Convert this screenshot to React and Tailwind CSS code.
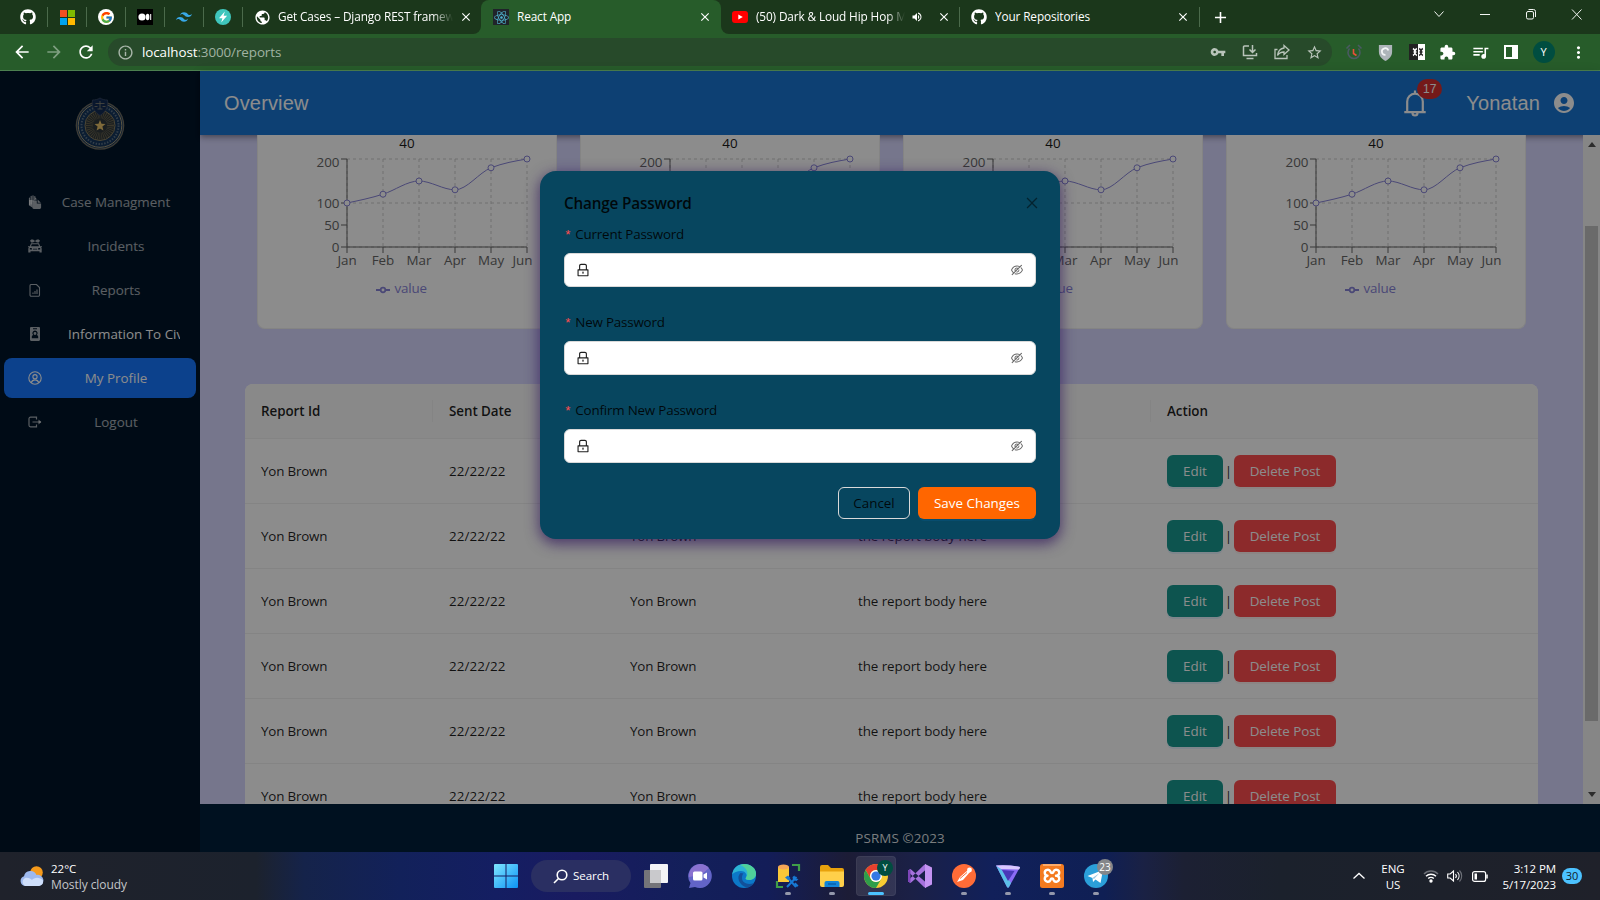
import React from "react";
import { FaGithub, FaReact } from "react-icons/fa";
import { FcGoogle } from "react-icons/fc";
import { SiTailwindcss } from "react-icons/si";
import { AiOutlineLock, AiOutlineEyeInvisible, AiOutlineClose } from "react-icons/ai";
import {
  MdAccountCircle, MdExtension, MdQueueMusic, MdVpnKey, MdStarBorder, MdArrowBack,
  MdArrowForward, MdRefresh, MdInfoOutline, MdMoreVert, MdClose, MdAdd, MdVolumeUp, MdPublic,
} from "react-icons/md";

/* ---------- browser chrome ---------- */

const Sep = () => <span className="h-5 w-px shrink-0 bg-[#4b6a4b]" />;

const TabClose = () => <MdClose className="size-[14px] shrink-0 text-white" />;

function PinnedTab({ children }) {
  return (
    <>
      <span className="flex w-[38px] shrink-0 items-center justify-center">{children}</span>
      <Sep />
    </>
  );
}

function TabTitle({ children, fade }) {
  return (
    <span
      className={
        "min-w-0 flex-1 overflow-hidden whitespace-nowrap text-[11.8px] tracking-[-0.12px] text-white " +
        (fade ? "[mask-image:linear-gradient(to_right,black_88%,transparent)]" : "")
      }
    >
      {children}
    </span>
  );
}

function TabStrip() {
  return (
    <div className="flex h-[34px] bg-[#275c2a]">
      <div className="flex w-[481px] items-center rounded-br-lg bg-[#1b371b] pl-[9px]">
        <PinnedTab><FaGithub className="size-4 text-white" /></PinnedTab>
        <PinnedTab>
          <span className="grid grid-cols-2 gap-px">
            <i className="size-[7px] bg-[#f25022]" /><i className="size-[7px] bg-[#7fba00]" />
            <i className="size-[7px] bg-[#00a4ef]" /><i className="size-[7px] bg-[#ffb900]" />
          </span>
        </PinnedTab>
        <PinnedTab>
          <span className="flex size-4 items-center justify-center rounded-full bg-white">
            <FcGoogle className="size-[13px]" />
          </span>
        </PinnedTab>
        <PinnedTab>
          <svg className="size-4" viewBox="0 0 16 16">
            <rect width="16" height="16" fill="#000" />
            <circle cx="5" cy="8" r="3.6" fill="#fff" />
            <ellipse cx="10.6" cy="8" rx="1.8" ry="3.3" fill="#fff" />
            <rect x="13.2" y="5" width="1" height="6" fill="#fff" />
          </svg>
        </PinnedTab>
        <PinnedTab><SiTailwindcss className="size-4 text-[#38a8e8]" /></PinnedTab>
        <PinnedTab>
          <svg className="size-4" viewBox="0 0 16 16">
            <circle cx="8" cy="8" r="8" fill="#3fc6bd" />
            <path d="M9.8 2.5 4 9.2h3.4l-1.2 4.3 5.9-6.7H8.6z" fill="#fff" />
          </svg>
        </PinnedTab>
        <div className="flex min-w-0 flex-1 items-center pl-[11px] pr-2">
          <MdPublic className="mr-[7px] size-[17px] shrink-0 text-white" />
          <TabTitle fade>Get Cases – Django REST framework</TabTitle>
          <span className="ml-[6px] flex"><TabClose /></span>
        </div>
      </div>
      <div className="w-[240px] bg-[#1b371b]">
        <div className="flex h-full items-center rounded-t-lg bg-[#275c2a] pl-3 pr-[9px]">
          <span className="mr-2 flex size-4 items-center justify-center bg-[#20232a]">
            <FaReact className="size-[15px] text-[#4fb3cf]" />
          </span>
          <TabTitle>React App</TabTitle>
          <TabClose />
        </div>
      </div>
      <div className="flex flex-1 items-center rounded-bl-lg bg-[#1b371b]">
        <div className="flex w-[238px] items-center pl-[11px] pr-2">
          <svg className="mr-2 h-[12px] w-4 shrink-0" viewBox="0 0 16 12">
            <rect width="16" height="12" rx="3" fill="#f00" />
            <path d="M6.3 3.4v5.2L10.8 6z" fill="#fff" />
          </svg>
          <TabTitle fade>(50) Dark &amp; Loud Hip Hop Mix</TabTitle>
          <MdVolumeUp className="ml-[6px] mr-[14px] size-3 shrink-0 text-white" />
          <TabClose />
        </div>
        <Sep />
        <div className="flex w-[239px] items-center pl-[11px] pr-[9px]">
          <FaGithub className="mr-2 size-4 shrink-0 text-white" />
          <TabTitle>Your Repositories</TabTitle>
          <TabClose />
        </div>
        <Sep />
        <MdAdd className="ml-[11px] size-[19px] text-white" />
        <svg className="ml-auto h-[34px] w-[172px]" viewBox="0 0 172 34" fill="none" stroke="#f2f5f2" strokeWidth="1">
          <path d="m6.500 11.500 4.500 5 4.500-5M52 14.500h10" />
          <rect x="98.500" y="11.500" width="7" height="7.500" rx="1.500" />
          <path d="M100.500 9.500h5a2 2 0 0 1 2 2v5.500M144 9.500l9.500 10M153.500 9.500l-9.500 10" />
        </svg>
      </div>
    </div>
  );
}

function Toolbar() {
  return (
    <div className="flex h-9 items-center bg-[#275c2a]">
      <div className="flex w-[108px] items-center gap-3 pl-3">
        <MdArrowBack className="size-5 text-white" />
        <MdArrowForward className="size-5 text-[#7f9f81]" />
        <MdRefresh className="size-5 text-white" />
      </div>
      <div className="flex h-7 w-[1224px] items-center rounded-full bg-[#274a2a] pl-[9px] pr-[9px]">
        <MdInfoOutline className="mr-[8px] size-[17px] text-[#a9b6aa]" />
        <span className="text-[13.400px] tracking-[-0.08px] text-[#a1b3a2]">
          <span className="text-white">localhost</span>:3000/reports
        </span>
        <div className="ml-auto flex items-center gap-4 text-[#b9c4ba]">
          <MdVpnKey className="size-4" />
          <svg className="size-4" viewBox="0 0 16 16" fill="none" stroke="currentColor" strokeWidth="1.500">
            <path d="M7 2H2.500a1 1 0 0 0-1 1v8.500h13V9M4.500 14.500h7M10.500 1v7M7.500 5.500l3 3 3-3" />
          </svg>
          <svg className="size-4" viewBox="0 0 16 16" fill="none" stroke="currentColor" strokeWidth="1.300">
            <path d="M3.500 5.500H1v9h12V11M10 1.500 15 6l-5 4.500V8C7 8 5 9 3.500 11.500 4 7.500 6 4.500 10 4z" />
          </svg>
          <MdStarBorder className="size-[17px]" />
        </div>
      </div>
      <div className="flex flex-1 items-center justify-between pl-[13px] pr-[12px]">
        <svg className="size-[18px]" viewBox="0 0 18 18" fill="none" stroke="#4a5a63" strokeWidth="1.600">
          <path d="M4.500 5.500a6 6 0 1 0 9 0M1.500 5.500 5 2M16.500 5.500 13 2" />
          <path d="M8.500 6v4.500l3 2" stroke="#e8503a" />
        </svg>
        <svg className="size-[17px]" viewBox="0 0 18 18">
          <path d="M2 1h14v7c0 5-3 8-7 10-4-2-7-5-7-10z" fill="#aeb5ba" />
          <path d="M12 7A3.500 3.500 0 1 0 9 11.500" fill="none" stroke="#f3f5f6" strokeWidth="1.800" />
        </svg>
        <svg className="size-4" viewBox="0 0 16 16">
          <rect width="9" height="16" fill="#222" /><rect x="9" width="7" height="16" fill="#fff" />
          <path d="M4 4.500a4 4 0 0 1 0 7M7.800 4.500a4 4 0 0 0 0 7M4.500 8h3" stroke="#fff" strokeWidth="1.500" fill="none" />
          <path d="M10.200 4.500a4 4 0 0 1 0 7M13.800 4.500a4 4 0 0 0 0 7M10.500 8h3" stroke="#222" strokeWidth="1.500" fill="none" />
        </svg>
        <MdExtension className="size-[17px] text-white" />
        <MdQueueMusic className="size-[19px] text-white" />
        <svg className="size-[14px]" viewBox="0 0 14 14">
          <path d="M0 0h14v14H0zM2 2v10h6V2z" fill="#fff" fillRule="evenodd" />
        </svg>
        <span className="flex size-[22px] items-center justify-center rounded-full bg-[#004d40] text-[11px] text-white">Y</span>
        <MdMoreVert className="size-[19px] text-white" />
      </div>
    </div>
  );
}

/* ---------- sidebar ---------- */

function Seal() {
  return (
    <svg className="h-14 w-[52px]" viewBox="0 0 52 56">
      <circle cx="26" cy="29.500" r="24.300" fill="#6f6d62" />
      <circle cx="26" cy="29.500" r="23" fill="#15355c" />
      <circle cx="26" cy="29.500" r="21.800" fill="none" stroke="#a59a78" strokeWidth="1" />
      <circle cx="26" cy="29.500" r="18.500" fill="none" stroke="#5f7486" strokeWidth="2" strokeDasharray="1.400 1.500" />
      <circle cx="26" cy="29.500" r="15" fill="#31383b" stroke="#8d8260" strokeWidth="1" />
      <circle cx="26" cy="29.500" r="10.500" fill="none" stroke="#6d674f" strokeWidth="7" strokeDasharray="0.700 1.100" />
      <path d="M18.500 4c3 0 5-.5 7.500-2 2.500 1.500 4.500 2 7.500 2 1 7-2 12-7.500 15.500C20.500 16 17.500 11 18.500 4z" fill="#122a52" stroke="#3b4a66" strokeWidth=".8" />
      <path d="M26 5v8M21.500 7.500h9M20.500 10.500h3M28.500 10.500h3M23.500 13h5" stroke="#8d8a78" strokeWidth=".8" fill="none" />
      <path d="m26 24 1.500 3.800 4 .2-3.100 2.600 1 4-3.400-2.200-3.400 2.200 1-4-3.100-2.600 4-.2z" fill="#e8c26a" />
    </svg>
  );
}

const menuIcons = {
  cases: (
    <g fill="currentColor">
      <path d="M1.500 10V3.200M3.200 9V1.300M5 6V.8M6.800 5V1.600" stroke="currentColor" strokeWidth="1.200" strokeLinecap="round" />
      <path d="M1 5h3.500v7.500C2.500 11.500 1 10.500 1 9z" />
      <path d="M5.200 5.500h3.600v3h4.300v4.100c0 .8-.6 1.400-1.400 1.400H5.800c-.8 0-1.400-.6-1.400-1.400V6.300c0-.5.300-.8.800-.8z" />
      <path d="M9.600 4.500v3.200h3.300z" />
      <path d="M7.500 2.500 9 4.500H6.500z" />
    </g>
  ),
  incidents: (
    <g fill="currentColor">
      <path d="M2 1.800 3.200.6h2L6.300 2 5.200 3.400H3.200zM7.700 2 8.800.6h2L12 1.800l-1.200 1.600h-2z" />
      <path d="M5.500 1.600h3v.9h-3z" />
      <path fillRule="evenodd" d="M3 4.300h8l1.200 2.900H14v1h-1l.7 1.200v4.200h-2.200v-1.400h-9v1.400H.3V9.400L1 8.200H0v-1h1.800zM3.800 5.300 3 7.300h8l-.8-2zM1.800 9v1.400h2.400L3.600 9zM10.400 9l-.6 1.400h2.400V9zM5 9.800h4v.8H5z" />
    </g>
  ),
  reports: (
    <g fill="none" stroke="currentColor" strokeWidth="1.100">
      <path d="M3 1.500h5.500l3 3v7.500a1.200 1.200 0 0 1-1.200 1.200H3.200A1.200 1.200 0 0 1 2 12V2.700A1.200 1.200 0 0 1 3 1.500z" />
      <path d="M5 11V9.500M7 11V8M9 11V6.500" />
    </g>
  ),
  info: (
    <path fill="currentColor" fillRule="evenodd" d="M3.200 0h7.600c.7 0 1.200.5 1.200 1.200v11.600c0 .7-.5 1.200-1.200 1.200H3.200c-.7 0-1.200-.5-1.200-1.200V1.200C2 .5 2.500 0 3.200 0zM5 1.300v1h4v-1zM7 3.600a2.600 2.600 0 0 0-1.800 4.500c-.9.400-1.400 1-1.400 1.900v1.300h6.400V10c0-.9-.5-1.500-1.400-1.900A2.600 2.600 0 0 0 7 3.600zM7 5a1.400 1.400 0 1 1 0 2.900A1.400 1.400 0 0 1 7 5z" />
  ),
  profile: (
    <g fill="none" stroke="currentColor" strokeWidth="1.100">
      <circle cx="7" cy="7" r="6.200" /><circle cx="7" cy="5.700" r="2.100" />
      <path d="M3.200 11.800C4 9.500 5.300 8.900 7 8.900s3 .6 3.800 2.900" />
    </g>
  ),
  logout: (
    <g fill="none" stroke="currentColor" strokeWidth="1.200">
      <path d="M8.500 4.500V2.200H2.500A1.500 1.500 0 0 0 1 3.700v6.600a1.500 1.500 0 0 0 1.500 1.500h6V9.500M4.500 7H13" />
      <path d="M10.500 4.600 13.400 7l-2.900 2.400z" fill="currentColor" stroke="none" />
    </g>
  ),
};

const menu = [
  { icon: "cases", label: "Case Managment" },
  { icon: "incidents", label: "Incidents" },
  { icon: "reports", label: "Reports" },
  { icon: "info", label: "Information To Civilians", hover: true },
  { icon: "profile", label: "My Profile", active: true },
  { icon: "logout", label: "Logout" },
];

function Sidebar() {
  return (
    <aside className="flex w-[200px] flex-col bg-[#001529] px-1">
      <div className="flex justify-center pt-[25px]"><Seal /></div>
      <nav className="mt-[30px] flex flex-col gap-1">
        {menu.map((m) => (
          <div
            key={m.label}
            className={
              "flex h-10 items-center rounded-lg pl-6 pr-4 text-[13.400px] " +
              (m.active ? "bg-[#1677ff] text-white" : "text-white/65")
            }
          >
            <svg className="size-[14px] shrink-0" viewBox="0 0 14 14">{menuIcons[m.icon]}</svg>
            {m.hover ? (
              <span className="ml-[26px] w-[112px] shrink-0 overflow-hidden whitespace-nowrap text-white">{m.label}</span>
            ) : (
              <span className="ml-[10px] flex-1 whitespace-nowrap text-center">{m.label}</span>
            )}
          </div>
        ))}
      </nav>
    </aside>
  );
}

/* ---------- dashboard ---------- */

const months = ["Jan", "Feb", "Mar", "Apr", "May", "Jun"];
const series = [100, 120, 150, 130, 180, 200];
const px = (i) => 90 + i * 36;
const py = (v) => 112 - v * 0.44;

function ChartCard() {
  return (
    <div className="h-[194px] w-[300px] rounded-b-lg border border-t-0 border-[#f0f0f0] bg-white">
      <svg className="-ml-px h-[194px] w-[300px] text-[13.400px]" viewBox="0 0 300 194">
        <text x="150" y="13" textAnchor="middle" fill="#1a1a1a">40</text>
        <g stroke="#ccc" strokeDasharray="3 3">
          {series.map((_, i) => <path key={i} d={`M${px(i)} 24V112`} />)}
          <path d="M90 24H270M90 68H270M90 112H270" />
        </g>
        <g stroke="#666">
          <path d="M90 24V112M90 112H270M84 24h6M84 68h6M84 90h6M84 112h6" />
          {series.map((_, i) => <path key={i} d={`M${px(i)} 112v6`} />)}
        </g>
        <g fill="#666" textAnchor="end">
          <text x="82.500" y="32">200</text><text x="82.500" y="73">100</text>
          <text x="82.500" y="95">50</text><text x="82.500" y="117">0</text>
        </g>
        <g fill="#666" textAnchor="middle">
          {months.map((m, i) => <text key={m} x={i === 5 ? 265.5 : px(i)} y="130">{m}</text>)}
        </g>
        <path
          d="M90 68C102 65.500 114 63 126 59.200S150 46 162 46s24 8.800 36 8.800S222 37.500 234 32.800 258 26 270 24"
          fill="none" stroke="#8884d8"
        />
        <g fill="#fff" stroke="#8884d8">
          {series.map((v, i) => <circle key={i} cx={px(i)} cy={py(v)} r="3" />)}
        </g>
        <path d="M119 155h4.500M128.500 155h4.500" stroke="#8884d8" strokeWidth="1.800" />
        <circle cx="126" cy="155" r="2.300" fill="none" stroke="#8884d8" strokeWidth="1.700" />
        <text x="137.500" y="158" fill="#8884d8" letterSpacing="-0.15">value</text>
      </svg>
    </div>
  );
}

const grid = "grid grid-cols-[188px_181px_228px_309px_387px]";
const heads = ["Report Id", "Sent Date", "Sent By", "Body", "Action"];

function ReportTable() {
  return (
    <div className="ml-[45px] mt-[55px] w-[1293px] overflow-hidden rounded-t-lg bg-white text-[13.400px] text-black/88">
      <div className={grid + " h-[55px] items-center border-b border-[#f0f0f0] bg-[#fafafa] font-semibold tracking-[-0.05px]"}>
        {heads.map((h, i) => (
          <div key={h} className={"flex h-[22px] items-center pl-4 pr-4 " + (i < 4 ? "border-r border-[#f0f0f0]" : "")}>{h}</div>
        ))}
      </div>
      {[0, 1, 2, 3, 4, 5].map((r) => (
        <div key={r} className={grid + " h-[65px] items-center border-b border-[#f0f0f0]"}>
          <div className="px-4 tracking-[-0.2px]">Yon Brown</div>
          <div className="px-4 tracking-[0.08px]">22/22/22</div>
          <div className="px-4 tracking-[-0.2px]">Yon Brown</div>
          <div className="px-4 tracking-[-0.07px]">the report body here</div>
          <div className="flex items-center px-4">
            <button className="h-8 w-14 rounded-md bg-[#189a91] text-white shadow-[0_2px_0_rgba(5,145,255,0.1)]">Edit</button>
            <span className="w-[11px] text-center">|</span>
            <button className="h-8 w-[102px] whitespace-nowrap rounded-md bg-[#ff4d4f] tracking-[-0.05px] text-white shadow-[0_2px_0_rgba(255,38,5,0.06)]">Delete Post</button>
          </div>
        </div>
      ))}
    </div>
  );
}

function Header() {
  return (
    <header className="flex h-16 shrink-0 items-center bg-[#1976d2] pl-6 pr-6 font-['Liberation_Sans',sans-serif] text-[20px] tracking-[0.15px] text-white shadow-[0_2px_4px_-1px_rgba(0,0,0,0.2),0_4px_5px_rgba(0,0,0,0.14),0_1px_10px_rgba(0,0,0,0.12)]">
      <span>Overview</span>
      <div className="relative ml-auto h-8 w-[24px]">
        <svg className="h-8 w-6" viewBox="0 0 24 32" fill="none" stroke="#fff" strokeWidth="2.200">
          <path d="M1.300 25.200h21.400M4.200 25V14.500a7.800 7.800 0 0 1 15.600 0V25M12 7V3.500M9.500 26a2.500 2.500 0 0 0 5 0" />
        </svg>
        <span className="absolute -top-[11px] left-[14px] mt-[3px] flex h-5 w-[25px] items-center justify-center rounded-full bg-[#d32f2f] text-[12px]">17</span>
      </div>
      <span className="ml-[39px]">Yonatan</span>
      <MdAccountCircle className="ml-[12px] size-6" />
    </header>
  );
}

function Page() {
  return (
    <div className="flex h-[781px]">
      <Sidebar />
      <div className="flex flex-1 flex-col bg-[#d8d8ff]">
        <Header />
        <main className="flex h-[669px]">
          <div className="h-[669px] flex-1 overflow-hidden">
            <div className="flex gap-[23px] pl-[57px]">
              {[0, 1, 2, 3].map((i) => <ChartCard key={i} />)}
            </div>
            <ReportTable />
          </div>
          <div className="flex w-[17px] flex-col items-center bg-[#f5f5f5]">
            <span className="mb-[79px] mt-[7px] h-0 w-0 border-x-4 border-b-[5px] border-x-transparent border-b-[#505050]" />
            <span className="h-[495px] w-[13px] bg-[#c1c1c1]" />
            <span className="mb-[7px] mt-auto h-0 w-0 border-x-4 border-t-[5px] border-x-transparent border-t-[#505050]" />
          </div>
        </main>
        <footer className="flex flex-1 items-center justify-center bg-[#001f3b] pt-5 text-[13.400px] tracking-[0.1px] text-white/88">
          PSRMS ©2023
        </footer>
      </div>
    </div>
  );
}

/* ---------- modal ---------- */

function PasswordField({ label }) {
  return (
    <div className="h-[88px]">
      <div className="flex h-[22px] items-center text-[13.400px] tracking-[-0.2px] text-black/88">
        <span className="mr-[5px] mt-[3px] font-['Liberation_Mono',monospace] text-[13px] leading-none tracking-[-1.5px] text-[#ff4d4f]">*</span>
        {label}
      </div>
      <div className="mt-2 flex h-[34px] items-center justify-between rounded-md border border-[#d9d9d9] bg-white pl-[10px] pr-[11px]">
        <AiOutlineLock className="size-4 text-black/88" />
        <AiOutlineEyeInvisible className="size-[14px] text-black/60" />
      </div>
    </div>
  );
}

function PasswordModal() {
  return (
    <div className="h-[368px] w-[520px] rounded-2xl bg-[#07465f] px-6 pt-5 shadow-[0_4px_14px_1px_rgba(45,20,90,0.7)]">
      <div className="flex h-6 items-center justify-between text-[15.300px] font-semibold tracking-[-0.18px] text-black/88">
        Change Password
        <AiOutlineClose className="-mr-1 size-4 text-black/50" />
      </div>
      <div className="mt-[8px]">
        <PasswordField label="Current Password" />
        <PasswordField label="New Password" />
        <PasswordField label="Confirm New Password" />
      </div>
      <div className="flex justify-end gap-2 text-[13.400px]">
        <button className="h-8 w-[72px] rounded-md border border-[#d9d9d9] text-black/88">Cancel</button>
        <button className="h-8 w-[118px] rounded-md bg-[#ff6600] font-medium text-white shadow-[0_2px_0_rgba(5,145,255,0.1)]">Save Changes</button>
      </div>
    </div>
  );
}

/* ---------- taskbar ---------- */

const apps = [
  { id: "taskview", icon: (
    <><rect x="8" y="2" width="18" height="19" rx="1" fill="#f4f4f6" /><rect x="2" y="8" width="17" height="18" rx="1" fill="#747479" /><rect x="8" y="8" width="11" height="13" fill="#c9c9cc" /></>
  ) },
  { id: "chat", icon: (
    <><path d="M14 2a12 12 0 1 1-5 23l-6 1 1.500-5A12 12 0 0 1 14 2z" fill="#6264c7" /><path d="M14 2a12 12 0 0 0-11 13l12-2 8-7a12 12 0 0 0-9-4z" fill="#8a72d0" /><rect x="7" y="9.500" width="9.500" height="9" rx="1.500" fill="#fff" /><path d="m17.500 12.500 3.500-2v7l-3.500-2z" fill="#fff" /></>
  ) },
  { id: "edge", icon: (
    <><circle cx="14" cy="14" r="12" fill="#0c78c8" /><path d="M2.200 12.500C3 6 8 2 14 2c7 0 12 4.500 12 9.500 0 4-3 6.500-7 6.500-3 0-4-1-3-2.500 2-3-1-6.500-5-6.500-4 0-7 1.500-8.800 3.500z" fill="#2cb3d5" /><path d="M14 2c7 0 12 4.500 12 9.500 0 4-3 6.500-7 6.500-3 0-4-1-3-2.500 3-4 1-10-6-12.500z" fill="#4fd09a" /><path d="M10.500 11C6 15 9 23.500 17 25.500c3-.5 5.500-2 7-4.500-6 2.500-12 0-12-5 0-2.500.5-3.500 1.500-4.500z" fill="#12509a" /></>
  ) },
  { id: "tools", run: true, icon: (
    <><path d="M4 5h11v15H4z" fill="#f9c838" /><ellipse cx="9.500" cy="5" rx="5.500" ry="2.500" fill="#f5a556" /><path d="M18 3h7v6M3 19v6h6" stroke="#3f9e48" strokeWidth="2.200" fill="none" /><path d="m14 16 8 9M22.500 15 13 25" stroke="#1779d4" strokeWidth="2" /><path d="m11 15.500 3-2 2.500 2.500-2.500 2zM20.500 13.500l1 3 3 .5-2 2-3.500-1-.500-3zM20 22l3 3 1.500-1.500-3-3z" fill="#1779d4" /></>
  ) },
  { id: "folder", run: true, icon: (
    <><path d="M2 5a2 2 0 0 1 2-2h6l3 3h11a2 2 0 0 1 2 2v4H2z" fill="#e8a20c" /><path d="M2 9.500h24V23a2 2 0 0 1-2 2H4a2 2 0 0 1-2-2z" fill="#ffd04a" /><path d="M6.500 25v-4a2 2 0 0 1 2-2h11a2 2 0 0 1 2 2v4z" fill="#1284d8" /><path d="M10 22h8" stroke="#0a5ea8" strokeWidth="1.400" /></>
  ) },
  { id: "chrome", active: true, icon: (
    <><circle cx="14" cy="14" r="12" fill="#f8cc32" /><path d="M3.600 8A12 12 0 0 1 24.400 8H14a6 6 0 0 0-5.200 9z" fill="#e6402f" /><path d="M3.600 8A12 12 0 0 0 14 26l5.200-9A6 6 0 0 1 8.800 17z" fill="#2f9e4a" /><circle cx="14" cy="14" r="6" fill="#fff" /><circle cx="14" cy="14" r="4.600" fill="#3479e4" /></>
  ) },
  { id: "vs", icon: (
    <><path fillRule="evenodd" d="M2 8.500 4.500 7 20 20.500V26L18 25 2 9.500zM2 19.500 4.500 21 20 7.500V2L18 3 2 18.500z" fill="#a571dd" /><path d="M2 8.500 4.500 7v14L2 19.500z" fill="#7e45b8" /><path d="m19 2 7 3.500v17L19 26z" fill="#c493f2" /></>
  ) },
  { id: "postman", run: true, icon: (
    <><circle cx="14" cy="14" r="12" fill="#ff6c37" /><path d="m7 20 3-5 8-7 2 2-7 8z" fill="#fff" /><circle cx="19.500" cy="8" r="2.400" fill="#fff" /><path d="m10 16.500 7-6" stroke="#ff6c37" /></>
  ) },
  { id: "proton", run: true, icon: (
    <><path d="M2 3.500Q14 2.500 26 5L15 25q-1 1.500-2 0z" fill="#8b6bf5" /><path d="M2 3.500 13 25q1 1.500 2 0l2-4L7 7z" fill="#5bc0e8" /><path d="M2 3.500Q14 2.500 26 5q0 1.500-1 2.500L7 7z" fill="#d9c8ff" /><path d="M8 8 20.500 9l-6.500 10z" fill="#4a39b8" /></>
  ) },
  { id: "xampp", run: true, icon: (
    <><rect x="2" y="2" width="24" height="24" rx="2.500" fill="#f47b20" /><path d="M5 3h18" stroke="#ffc08a" strokeWidth="1.400" /><path d="M9.500 13.700a3 3 0 1 1 3-4.200c.3 1 .3 1.500 1.500 1.500s1.200-.5 1.500-1.500a3 3 0 1 1 3 4.200h-.5.500a3 3 0 1 1-3 4.200c-.3-1-.3-1.500-1.500-1.500s-1.200.5-1.500 1.500a3 3 0 1 1-3-4.200z" fill="none" stroke="#fff" strokeWidth="2.400" strokeLinejoin="round" /></>
  ) },
  { id: "telegram", run: true, badge: true, icon: (
    <><circle cx="14" cy="14" r="12" fill="#2b9fd9" /><path d="m5.500 14 15.500-6-2.500 13-5-3.500-2.500 2.500-.5-4z" fill="#fff" /><path d="m10.500 16 7-5-5.500 6z" fill="#9cc9e4" /></>
  ) },
];

function Taskbar() {
  return (
    <div className="flex h-12 items-center bg-[linear-gradient(90deg,#1f222b_0%,#1c222d_16%,#15234a_19%,#12215a_25%,#141e62_31%,#191b60_36%,#131f5a_43%,#131d58_48%,#1c1c36_53%,#1b2046_57%,#11205a_62%,#0f1f54_69%,#1a2144_71.500%,#1c2033_74%,#1b212c_80%,#1f212a_100%)] text-[11.500px] text-white">
      <div className="flex w-[483px] items-center pl-5">
        <svg className="mr-[7px] h-5 w-6" viewBox="0 0 24 20">
          <circle cx="16.500" cy="6.500" r="6.300" fill="#f59a1b" />
          <path d="M5 20a5 5 0 0 1-1-9.700A6.600 6.600 0 0 1 16.500 9 5.500 5.500 0 0 1 19 20z" fill="#9db9ee" />
          <path d="M5 20a4.500 4.500 0 0 1 0-8c3-1 6 1 7 2 2-3 8-3.500 11 .5a5 5 0 0 1-4 5.500z" fill="#cfdffa" />
        </svg>
        <div className="pt-px leading-4">
          <div>22°C</div>
          <div className="text-[12px] tracking-[-0.07px] text-[#c3c5c9]">Mostly cloudy</div>
        </div>
      </div>
      <div className="flex w-[45px] justify-center">
        <svg className="size-6" viewBox="0 0 24 24">
          <defs>
            <linearGradient id="win" x1="0" y1="0" x2="1" y2="1"><stop stopColor="#7fe6ff" /><stop offset="1" stopColor="#0c93f5" /></linearGradient>
          </defs>
          <path d="M0 1a1 1 0 0 1 1-1h10.500v11.500H0zM12.500 0H23a1 1 0 0 1 1 1v10.500H12.500zM0 12.500h11.500V24H1a1 1 0 0 1-1-1zM12.500 12.500H24V23a1 1 0 0 1-1 1H12.500z" fill="url(#win)" />
        </svg>
      </div>
      <div className="ml-[3px] mr-[3px] flex h-8 w-[100px] items-center rounded-full bg-[#2a2f62] pl-[22px]">
        <svg className="mr-[5px] size-[15px]" viewBox="0 0 15 15" fill="none" stroke="#fff" strokeWidth="1.600">
          <circle cx="9" cy="6" r="4.800" /><path d="M5.500 9.500 1 14" />
        </svg>
        <span className="text-[11.600px] font-medium tracking-[-0.1px]">Search</span>
      </div>
      {apps.map((a) => (
        <div key={a.id} className="flex w-11 justify-center">
          <div
            className={
              "relative flex h-10 w-10 items-center justify-center rounded " +
              (a.active ? "border border-white/5 bg-white/10" : "")
            }
          >
            <svg className="size-7 shrink-0" viewBox="0 0 28 28">{a.icon}</svg>
            {a.active && <span className="absolute right-[2px] top-[3px] flex size-4 items-center justify-center rounded-full bg-[#004d40] text-[9px]">Y</span>}
            {a.badge && <span className="absolute right-[3px] top-[3px] flex size-4 items-center justify-center rounded-full bg-[#85878a] text-[10px]">23</span>}
            {a.active && <span className="absolute bottom-0 h-[3px] w-4 rounded-full bg-[#4cc2ff]" />}
            {a.run && <span className="absolute bottom-[1px] h-[3px] w-[6px] rounded-full bg-[#9498ab]" />}
          </div>
        </div>
      ))}
      <div className="ml-auto flex items-center pr-[18px]">
        <svg className="h-2 w-3" viewBox="0 0 12 8" fill="none" stroke="#fff" strokeWidth="1.300"><path d="m.500 6.500 5.500-5 5.500 5" /></svg>
        <div className="ml-4 w-6 pt-px text-center leading-4"><div>ENG</div><div>US</div></div>
        <svg className="ml-[19px] h-[14px] w-[14px] overflow-visible" viewBox="0 0 14 14" fill="none" stroke="#fff" strokeWidth="1.400">
          <path d="M0 5a9.800 9.800 0 0 1 14 0" stroke="#6d7078" /><path d="M2 7.300a7 7 0 0 1 10 0M4.200 9.600a4 4 0 0 1 5.600 0" /><circle cx="7" cy="12" r="1" fill="#fff" />
        </svg>
        <svg className="ml-[9px] h-[14px] w-4" viewBox="0 0 16 14" fill="none" stroke="#fff" strokeWidth="1.100">
          <path d="M.700 5v4h2.500l3.300 3V2L3.200 5zM8.500 5a3 3 0 0 1 0 4M10.500 3a6 6 0 0 1 0 8" /><path d="M12.500 1.500a8 8 0 0 1 0 11" stroke="#6d7078" />
        </svg>
        <svg className="ml-[9px] h-[11px] w-4" viewBox="0 0 16 11" fill="none" stroke="#fff" strokeWidth="1.200">
          <rect x=".600" y=".600" width="13" height="9.800" rx="2" /><path d="M15 3.500v4" strokeWidth="1.500" /><rect x="2.500" y="2.500" width="2.500" height="6" fill="#fff" stroke="none" />
        </svg>
        <div className="ml-[14px] flex w-[54px] flex-col items-end whitespace-nowrap pt-px leading-4 tracking-[-0.1px]"><div>3:12 PM</div><div>5/17/2023</div></div>
        <span className="ml-[6px] flex h-4 w-5 items-center justify-center rounded-full bg-[#4cc2ff] text-[11px] text-[#10202c]">30</span>
      </div>
    </div>
  );
}

export default function App() {
  return (
    <div className="flex h-[900px] w-[1600px] flex-col overflow-hidden bg-black font-['Open_Sans','Noto_Sans',sans-serif]">
      <TabStrip />
      <Toolbar />
      <div className="h-px bg-[#4c8050]" />
      <div className="relative">
        <Page />
        <div className="absolute inset-0 flex items-start justify-center bg-black/45 pt-[100px]">
          <PasswordModal />
        </div>
      </div>
      <Taskbar />
    </div>
  );
}
